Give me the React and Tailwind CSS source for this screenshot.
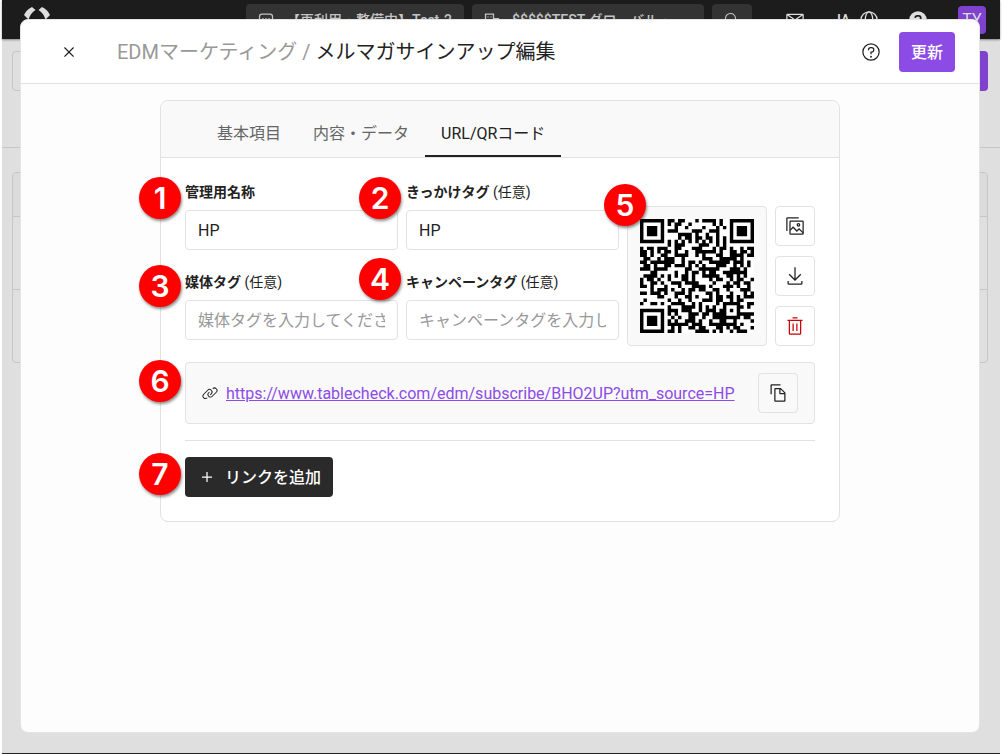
import React from 'react';

/* ---------- QR code (version 4, level M, byte mode) ---------- */

const SIZE = 33;
const BLOCKS = 2;
const DATA_PER_BLOCK = 32;
const ECC_PER_BLOCK = 18;
const LEVEL_BITS = 0;
const MASK_ID = 3;
const masked = (r, c) => (r + c) % 3 === 0;

function gfMul(x, y) {
  let z = 0;
  for (let i = 7; i >= 0; i--) {
    z = (z << 1) ^ ((z >>> 7) * 0x11d);
    z ^= ((y >>> i) & 1) * x;
  }
  return z;
}

function eccFor(data, degree) {
  const divisor = Array(degree).fill(0);
  divisor[degree - 1] = 1;
  let root = 1;
  for (let i = 0; i < degree; i++) {
    for (let j = 0; j < degree; j++) {
      divisor[j] = gfMul(divisor[j], root);
      if (j + 1 < degree) divisor[j] ^= divisor[j + 1];
    }
    root = gfMul(root, 2);
  }
  const result = Array(degree).fill(0);
  data.forEach((b) => {
    const factor = b ^ result.shift();
    result.push(0);
    divisor.forEach((d, i) => {
      result[i] ^= gfMul(d, factor);
    });
  });
  return result;
}

function codewords(text) {
  const bits = [];
  const push = (v, n) => {
    for (let i = n - 1; i >= 0; i--) bits.push((v >>> i) & 1);
  };
  push(4, 4);
  push(text.length, 8);
  for (const ch of text) push(ch.charCodeAt(0), 8);
  const capacity = DATA_PER_BLOCK * BLOCKS * 8;
  push(0, Math.min(4, capacity - bits.length));
  push(0, (8 - (bits.length % 8)) % 8);
  for (let pad = 0xec; bits.length < capacity; pad ^= 0xec ^ 0x11) push(pad, 8);
  const bytes = [];
  for (let i = 0; i < bits.length; i += 8) bytes.push(parseInt(bits.slice(i, i + 8).join(''), 2));
  const blocks = [];
  for (let b = 0; b < BLOCKS; b++) blocks.push(bytes.slice(b * DATA_PER_BLOCK, (b + 1) * DATA_PER_BLOCK));
  const eccs = blocks.map((b) => eccFor(b, ECC_PER_BLOCK));
  const out = [];
  for (let i = 0; i < DATA_PER_BLOCK; i++) blocks.forEach((b) => out.push(b[i]));
  for (let i = 0; i < ECC_PER_BLOCK; i++) eccs.forEach((b) => out.push(b[i]));
  return out;
}

function buildMatrix(words) {
  const m = Array.from({ length: SIZE }, () => Array(SIZE).fill(false));
  const fixed = Array.from({ length: SIZE }, () => Array(SIZE).fill(false));
  const set = (r, c, v) => {
    if (r < 0 || c < 0 || r >= SIZE || c >= SIZE) return;
    m[r][c] = !!v;
    fixed[r][c] = true;
  };
  for (let i = 0; i < SIZE; i++) {
    set(6, i, i % 2 === 0);
    set(i, 6, i % 2 === 0);
  }
  [[3, 3], [3, SIZE - 4], [SIZE - 4, 3]].forEach(([r, c]) => {
    for (let y = -4; y <= 4; y++)
      for (let x = -4; x <= 4; x++) {
        const d = Math.max(Math.abs(x), Math.abs(y));
        set(r + y, c + x, d !== 2 && d !== 4);
      }
  });
  for (let y = -2; y <= 2; y++)
    for (let x = -2; x <= 2; x++) set(26 + y, 26 + x, Math.max(Math.abs(x), Math.abs(y)) !== 1);

  const info = (LEVEL_BITS << 3) | MASK_ID;
  let rem = info;
  for (let i = 0; i < 10; i++) rem = (rem << 1) ^ ((rem >>> 9) * 0x537);
  const f = ((info << 10) | rem) ^ 0x5412;
  const bit = (i) => (f >>> i) & 1;
  for (let i = 0; i <= 5; i++) set(i, 8, bit(i));
  set(7, 8, bit(6));
  set(8, 8, bit(7));
  set(8, 7, bit(8));
  for (let i = 9; i < 15; i++) set(8, 14 - i, bit(i));
  for (let i = 0; i < 8; i++) set(8, SIZE - 1 - i, bit(i));
  for (let i = 8; i < 15; i++) set(SIZE - 15 + i, 8, bit(i));
  set(SIZE - 8, 8, 1);

  let i = 0;
  for (let right = SIZE - 1; right >= 1; right -= 2) {
    if (right === 6) right = 5;
    for (let v = 0; v < SIZE; v++)
      for (let j = 0; j < 2; j++) {
        const c = right - j;
        const r = ((right + 1) & 2) === 0 ? SIZE - 1 - v : v;
        if (fixed[r][c]) continue;
        const on = i < words.length * 8 ? (words[i >>> 3] >>> (7 - (i & 7))) & 1 : 0;
        m[r][c] = !!on !== masked(r, c);
        i++;
      }
  }
  return m;
}

function qrPath(text) {
  let d = '';
  buildMatrix(codewords(text)).forEach((row, r) => {
    for (let c = 0; c < SIZE; c++) {
      if (!row[c]) continue;
      let n = 1;
      while (row[c + n]) n++;
      d += `M${c} ${r}h${n}v1h-${n}z`;
      c += n;
    }
  });
  return d;
}

const LINK = 'https://www.tablecheck.com/edm/subscribe/BHO2UP?utm_source=HP';
const QR = qrPath(LINK);

/* ---------- Icons ---------- */

function Icon({ children, className = 'size-5' }) {
  return (
    <svg viewBox="0 0 32 32" fill="currentColor" aria-hidden="true" className={`shrink-0 ${className}`}>
      {children}
    </svg>
  );
}

const CloseIcon = () => (
  <Icon><path d="M24 9.4 22.6 8 16 14.6 9.4 8 8 9.4 14.6 16 8 22.6 9.4 24 16 17.4 22.6 24 24 22.6 17.4 16z" /></Icon>
);
const HelpIcon = () => (
  <Icon>
    <path d="M16 2a14 14 0 1 0 14 14A14 14 0 0 0 16 2Zm0 26a12 12 0 1 1 12-12 12 12 0 0 1-12 12Z" />
    <circle cx="16" cy="23.5" r="1.5" />
    <path d="M17 8h-1.5a4.49 4.49 0 0 0-4.5 4.5v.5h2v-.5a2.5 2.5 0 0 1 2.5-2.5H17a2.5 2.5 0 0 1 0 5h-2v4.5h2V17a4.5 4.5 0 0 0 0-9Z" />
  </Icon>
);
const ImagesIcon = () => (
  <Icon>
    <path d="M4 24H2V4a2 2 0 0 1 2-2h18v2H4z" />
    <g fill="none" stroke="currentColor" strokeWidth="2">
      <rect x="8" y="8" width="21" height="21" rx="1" />
      <circle cx="21.5" cy="14" r="2" />
      <path d="m8 23 5-5 6 6 3.5-3.5L29 27" />
    </g>
  </Icon>
);
const DownloadIcon = () => (
  <Icon>
    <path d="M26 24v4H6v-4H4v4a2 2 0 0 0 2 2h20a2 2 0 0 0 2-2v-4zM26 14l-1.41-1.41L17 20.17V2h-2v18.17l-7.59-7.58L6 14l10 10z" />
  </Icon>
);
const TrashIcon = () => (
  <Icon>
    <path d="M12 12h2v12h-2zM18 12h2v12h-2zM4 6v2h2v20a2 2 0 0 0 2 2h16a2 2 0 0 0 2-2V8h2V6zm4 22V8h16v20zM12 2h8v2h-8z" />
  </Icon>
);
const CopyIcon = () => (
  <Icon>
    <path d="m27.4 14.7-6.1-6.1C21 8.2 20.5 8 20 8h-8c-1.1 0-2 .9-2 2v18c0 1.1.9 2 2 2h14c1.1 0 2-.9 2-2V16.1c0-.5-.2-1-.6-1.4zM20 10l5.9 6H20v-6zm-8 18V10h6v6c0 1.1.9 2 2 2h6v10H12z" />
    <path d="M6 18H4V4c0-1.1.9-2 2-2h14v2H6v14z" />
  </Icon>
);
const LinkIcon = () => (
  <Icon className="size-4">
    <path d="M29.25 6.76a6 6 0 0 0-8.5 0l1.42 1.42a4 4 0 1 1 5.67 5.67l-8 8a4 4 0 1 1-5.67-5.66l1.41-1.42-1.41-1.42-1.42 1.42a6 6 0 0 0 0 8.5A6 6 0 0 0 17 25a6 6 0 0 0 4.27-1.76l8-8a6 6 0 0 0-.02-8.48z" />
    <path d="M4.19 24.82a4 4 0 0 1 0-5.67l8-8a4 4 0 0 1 5.67 0A3.94 3.94 0 0 1 19 14a4 4 0 0 1-1.17 2.85L15.71 19l1.42 1.42 2.12-2.12a6 6 0 0 0-8.51-8.51l-8 8a6 6 0 0 0 0 8.51A6 6 0 0 0 7 28a6.07 6.07 0 0 0 4.28-1.76L9.86 24.82a4 4 0 0 1-5.67 0z" />
  </Icon>
);
const AddIcon = () => (
  <Icon><path d="M17 15V8h-2v7H8v2h7v7h2v-7h7v-2z" /></Icon>
);
const LogoIcon = () => (
  <svg viewBox="0 0 26 26" fill="currentColor" aria-hidden="true" className="size-[26px] shrink-0">
    <path d="M0 8Q2.500 2.500 8 0L11.500 3Q6.500 6 4.500 12.500ZM26 8Q23.500 2.500 18 0L14.500 3Q19.500 6 21.500 12.500ZM0 18Q2.500 23.500 8 26L11.500 23Q6.500 20 4.500 13.500ZM26 18Q23.500 23.500 18 26L14.500 23Q19.500 20 21.500 13.500Z" />
  </svg>
);
const ShopIcon = () => (
  <Icon className="size-4">
    <g fill="none" stroke="currentColor" strokeWidth="2.5">
      <rect x="3" y="4" width="26" height="24" rx="5" />
      <path d="M10 12v5M16 12v5M22 12v5M3 18h26" />
    </g>
  </Icon>
);
const BuildingIcon = () => (
  <Icon className="size-4">
    <g fill="none" stroke="currentColor" strokeWidth="2.5">
      <path d="M3 30V4h16v26M19 13h10v17M1 30h30" />
      <path d="M8 9v2M14 9v2M8 15v2M14 15v2M8 21v2M14 21v2" />
    </g>
  </Icon>
);
const SearchIcon = () => (
  <Icon className="size-4">
    <path d="m29 27.6-7.6-7.6a11 11 0 1 0-1.4 1.4l7.6 7.6zM4 13a9 9 0 1 1 9 9 9 9 0 0 1-9-9z" />
  </Icon>
);
const MailIcon = () => (
  <Icon>
    <path d="M28 6H4a2 2 0 0 0-2 2v16a2 2 0 0 0 2 2h24a2 2 0 0 0 2-2V8a2 2 0 0 0-2-2zm-2.2 2L16 14.78 6.2 8zM4 24V8.91l11.43 7.91a1 1 0 0 0 1.14 0L28 8.91V24z" />
  </Icon>
);
const GlobeIcon = () => (
  <Icon>
    <g fill="none" stroke="currentColor" strokeWidth="2">
      <circle cx="16" cy="16" r="13" />
      <ellipse cx="16" cy="16" rx="6" ry="13" />
      <path d="M3 16h26" />
    </g>
  </Icon>
);
const HelpFilledIcon = () => (
  <Icon>
    <circle cx="16" cy="16" r="14" />
    <path d="M11.5 12.5A3.5 3.5 0 0 1 15 9.3h2a3.2 3.2 0 0 1 0 6.7h-1v3.5" fill="none" stroke="#1c1c1c" strokeWidth="2.8" />
    <circle cx="16" cy="23.5" r="1.7" fill="#1c1c1c" />
  </Icon>
);

/* ---------- Pieces ---------- */

function Badge({ n, className }) {
  return (
    <span
      className={`absolute z-10 flex size-[42px] items-center justify-center rounded-full bg-[#ff0000] font-[Inter,sans-serif] text-3xl font-semibold text-white shadow-[1px_2px_3px_rgba(0,0,0,0.45)] ${className}`}
    >
      {n}
    </span>
  );
}

function Field({ id, label, optional, value, placeholder, n, badgeClass }) {
  return (
    <div className="relative min-w-0">
      <label htmlFor={id} className="block h-5 text-sm leading-5 font-bold whitespace-nowrap">
        {label}
        {optional && <span className="font-normal"> (任意)</span>}
      </label>
      <input
        id={id}
        type="text"
        defaultValue={value}
        placeholder={placeholder}
        className="mt-2 block h-10 w-full rounded border border-[#e2e2e2] bg-white px-3 text-base placeholder:text-[#999999]"
      />
      <Badge n={n} className={badgeClass} />
    </div>
  );
}

function IconButton({ label, children, className = '' }) {
  return (
    <button
      type="button"
      aria-label={label}
      className={`flex size-10 shrink-0 items-center justify-center rounded border border-[#e2e2e2] ${className}`}
    >
      {children}
    </button>
  );
}

function Backdrop() {
  return (
    <div className="flex min-h-screen flex-col border-b border-[#222222] bg-[#dfdfdf]">
      <header className="flex h-[39px] items-center bg-[#1c1c1c] pr-3.5 pl-[22px] text-[#dedede] shadow-[0_1px_2px_rgba(0,0,0,0.4)]">
        <LogoIcon />
        <div className="ml-auto flex items-center gap-2 text-sm font-medium">
          <button type="button" className="flex h-8 w-[218px] items-center gap-3 overflow-hidden rounded bg-[#333333] px-3 whitespace-nowrap text-[#c4c4c4]">
            <ShopIcon />
            【再利用・整備中】Test-2
          </button>
          <button type="button" className="flex h-8 w-[232px] items-center gap-3 overflow-hidden rounded bg-[#333333] px-3 whitespace-nowrap text-[#c4c4c4]">
            <BuildingIcon />
            $$$$$TEST グローバル・
          </button>
          <button type="button" aria-label="検索" className="flex h-8 w-10 items-center justify-center rounded bg-[#333333] text-[#c4c4c4]">
            <SearchIcon />
          </button>
        </div>
        <button type="button" aria-label="メール" className="ml-[33px]"><MailIcon /></button>
        <button type="button" className="ml-7 flex items-center gap-2.5 text-sm font-medium">
          <span className="w-4">JA</span>
          <GlobeIcon />
        </button>
        <button type="button" aria-label="ヘルプ" className="ml-[29px]"><HelpFilledIcon /></button>
        <button type="button" className="ml-[30px] flex size-7 items-center justify-center rounded bg-[#7f42cf] text-base">TY</button>
      </header>
      <div className="flex h-[109px] justify-between border-b border-[#c6c6c6] pt-3 pr-3 pl-2.5">
        <div className="h-10 w-60 rounded border border-[#c6c6c6]" />
        <div className="h-10 w-20 rounded bg-[#7f42cf]" />
      </div>
      <div className="mt-6 mr-3 ml-2.5 divide-y divide-[#c6c6c6] overflow-hidden rounded border border-[#c6c6c6]">
        <div className="h-11 bg-[#dbdbdb]" />
        <div className="h-[73px]" />
        <div className="h-[72px]" />
      </div>
    </div>
  );
}

const TABS = ['基本項目', '内容・データ', 'URL/QRコード'];

export default function App() {
  return (
    <div className="relative mr-0.5 min-h-screen border-l-2 border-white font-[Roboto,'Noto_Sans_CJK_JP',sans-serif] text-[#222222]">
      <Backdrop />
      <div
        role="dialog"
        aria-labelledby="dialog-title"
        className="absolute top-[19px] right-5 bottom-[21px] left-[18px] flex flex-col overflow-hidden rounded-lg border border-[#e4e4e4] bg-[#fdfdfd]"
      >
        <header className="flex h-16 shrink-0 items-center border-b border-[#e2e2e2] bg-white pr-6 pl-7">
          <button type="button" aria-label="閉じる" className="flex size-10 items-center justify-center">
            <CloseIcon />
          </button>
          <h1 id="dialog-title" className="ml-7 flex-1 text-xl">
            <span className="text-[#999999]">EDMマーケティング / </span>
            メルマガサインアップ編集
          </h1>
          <button type="button" aria-label="ヘルプ" className="flex size-10 items-center justify-center">
            <HelpIcon />
          </button>
          <button type="button" className="ml-2 h-10 rounded bg-[#8d4be6] px-3 pt-0.5 text-base font-medium text-white">
            更新
          </button>
        </header>

        <main className="flex-1 px-4 pt-4">
          <section className="mx-auto max-w-[680px] rounded-lg border border-[#e2e2e2] bg-white">
            <nav role="tablist" className="flex h-[57px] rounded-t-lg border-b border-[#e2e2e2] bg-[#f9f9f9] px-10 pt-2">
              {TABS.map((tab, i) => (
                <button
                  key={tab}
                  type="button"
                  role="tab"
                  aria-selected={i === 2}
                  className={
                    i === 2
                      ? 'border-b-2 border-[#222222] px-4 pt-1 text-base whitespace-nowrap'
                      : 'px-4 pt-0.5 text-base whitespace-nowrap text-[#666666]'
                  }
                >
                  {tab}
                </button>
              ))}
            </nav>

            <div className="p-6">
              <div className="flex items-start gap-2">
                <div className="grid min-w-0 flex-1 grid-cols-2 gap-x-2 gap-y-[22px]">
                  <Field id="name" label="管理用名称" value="HP" n={1} badgeClass="-top-[5px] -left-[46px]" />
                  <Field id="source" label="きっかけタグ" optional value="HP" n={2} badgeClass="-top-[5px] -left-[47px]" />
                  <Field id="medium" label="媒体タグ" optional placeholder="媒体タグを入力してください" n={3} badgeClass="-top-[7px] -left-[46px]" />
                  <Field id="campaign" label="キャンペーンタグ" optional placeholder="キャンペーンタグを入力してください" n={4} badgeClass="-top-[14px] -left-[47px]" />
                </div>
                <div className="relative mt-6 flex size-[140px] shrink-0 items-center justify-center rounded border border-[#e2e2e2] bg-[#f9f9f9]">
                  <svg viewBox="0 0 33 33" role="img" aria-label="QRコード" className="size-[114px] bg-white">
                    <path d={QR} fill="#000000" />
                  </svg>
                  <Badge n={5} className="-top-[23px] -left-6" />
                </div>
                <div className="mt-6 flex flex-col gap-2.5">
                  <IconButton label="画像"><ImagesIcon /></IconButton>
                  <IconButton label="ダウンロード"><DownloadIcon /></IconButton>
                  <IconButton label="削除" className="text-[#cc0000]"><TrashIcon /></IconButton>
                </div>
              </div>

              <div className="relative mt-4 flex items-center gap-2 rounded border border-[#e2e2e2] bg-[#f9f9f9] px-4 py-2.5">
                <LinkIcon />
                <a href={LINK} className="min-w-0 flex-1 pt-0.5 text-base whitespace-nowrap text-[#8d4be6] underline">
                  {LINK}
                </a>
                <IconButton label="コピー"><CopyIcon /></IconButton>
                <Badge n={6} className="-top-[3px] -left-[47px]" />
              </div>

              <hr className="mt-4 border-[#e2e2e2]" />

              <div className="relative mt-4 flex">
                <button type="button" className="flex h-10 items-center gap-2 rounded bg-[#2a2a2a] px-3 text-base font-medium text-white">
                  <AddIcon />
                  <span className="pt-0.5">リンクを追加</span>
                </button>
                <Badge n={7} className="-top-1 -left-[46px]" />
              </div>
            </div>
          </section>
        </main>
      </div>
    </div>
  );
}
